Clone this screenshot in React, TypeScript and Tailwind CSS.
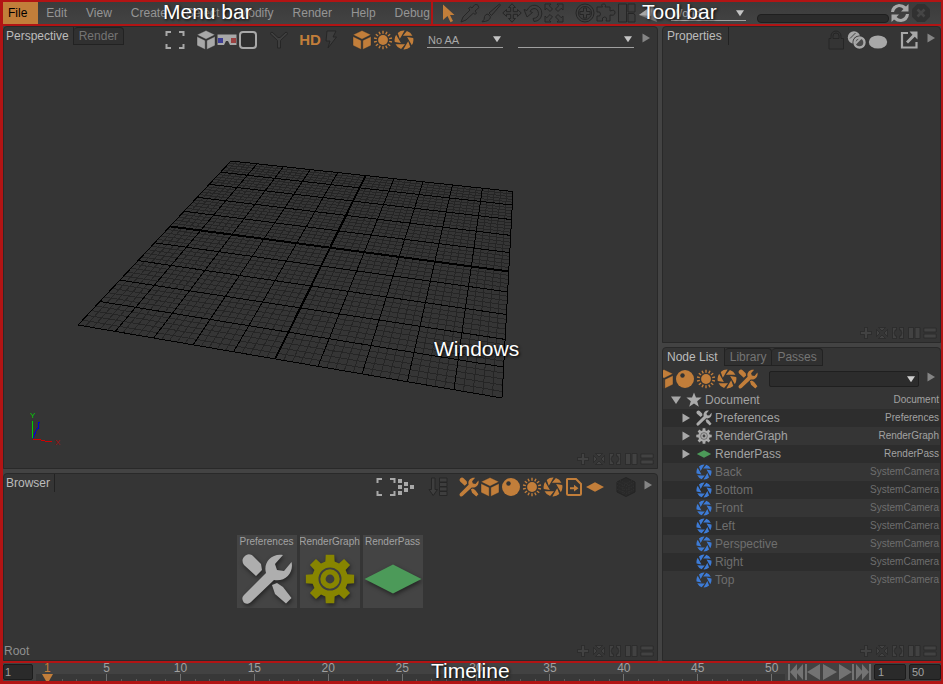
import { type ReactNode } from 'react';
import clsx from 'clsx';

interface IconProps {
    className?: string;
}

const ORANGE = 'fill-[#c27e3a] text-[#c27e3a]';
const LIGHT = 'fill-[#a8a8a8] text-[#a8a8a8]';
const OFF = 'fill-[#3e3e3e] text-[#262626]';

/* ---------- icons ---------- */

const Icon = ({ children, className, box = '0 0 20 20' }: { children: ReactNode; className?: string; box?: string }) => (
    <svg viewBox={box} className={clsx('block shrink-0', className ?? 'size-5')} aria-hidden="true">
        {children}
    </svg>
);

const Cube = ({ className }: IconProps) => (
    <Icon className={className}>
        <path d="M10 .5 19 4.8 10 9.2 1 4.8ZM1 6.5 9.2 10.4V19.5L1 15.5ZM19 6.5 10.8 10.4V19.5L19 15.5Z" stroke="#2a2a2a" strokeWidth=".4" />
    </Icon>
);

const Sun = ({ className }: IconProps) => (
    <Icon className={className} box="-10 -10 20 20">
        <circle r="4.9" />
        {Array.from({ length: 14 }, (_, i) => (
            <path key={i} d="M0 -6.3V-9.2" stroke="currentColor" strokeWidth="1.4" transform={`rotate(${(i * 360) / 14})`} />
        ))}
    </Icon>
);

const Shutter = ({ className }: IconProps) => (
    <Icon className={className} box="-10 -10 20 20">
        {[0, 60, 120, 180, 240, 300].map((a) => (
            <path key={a} d="M4.2 1.2 2.8 3.6-.6 9.4A9.4 9.4 0 0 0 6.3 7Z" transform={`rotate(${a})`} />
        ))}
    </Icon>
);

const Tools = ({ className }: IconProps) => (
    <Icon className={className} box="-1 -1 52 52">
        <path d="M41 1 33 10 35 16 42 17 49.5 8C52 18 44 28 32 26L9 48C6 51 2 50 1 47 0 45 0 43 2 41L24 19C21 9 29-1 41 1Z" />
        <path d="M2 3C5-1 9 0 11 2L19 10 20 16 14 22 2 11C0 8 0 5 2 3ZM30 31 35 29 41 33 49.5 44 44 49.5 33 40Z" />
    </Icon>
);

const Sphere = ({ className }: IconProps) => (
    <Icon className={className}>
        <circle cx="10" cy="10" r="9" />
        <circle cx="7.5" cy="6.5" r="2.2" fill="#333" />
    </Icon>
);

const Diamond = ({ className }: IconProps) => (
    <Icon className={className}>
        <path d="M10 5.2 19 10 10 14.8 1 10Z" />
    </Icon>
);

const gearPath = (() => {
    const pts: string[] = [];
    for (let i = 0; i < 8; i++) {
        [[-15, 18], [-10, 24.5], [10, 24.5], [15, 18]].forEach(([da, r]) => {
            const a = ((i * 45 + da) * Math.PI) / 180;
            pts.push(`${(r * Math.cos(a)).toFixed(2)} ${(r * Math.sin(a)).toFixed(2)}`);
        });
    }
    return `M${pts.join('L')}Z`;
})();

const Gear = ({ className, hole }: IconProps & { hole: string }) => (
    <Icon className={className} box="-25 -25 50 50">
        <path d={gearPath} />
        <circle r="10.6" fill="none" stroke={hole} strokeWidth="1.8" />
        <circle r="4.4" fill={hole} />
    </Icon>
);

const Brackets = () => (
    <Icon>
        <path d="M1.5 6V2H6M14 2H18.5V6M18.5 14V18H14M6 18H1.5V14" fill="none" stroke="currentColor" strokeWidth="2" />
    </Icon>
);

const Glasses = () => (
    <Icon>
        <path d="M.5 4.5H19.5V15H13L11 11H9L7 15H.5Z" />
        <path d="M1 8H6V13H1Z" fill="#3e3e94" />
        <path d="M14 8H19V13H14Z" fill="#9a4141" />
    </Icon>
);

const RoundSquare = () => (
    <Icon>
        <rect x="2" y="2" width="16" height="16" rx="3" fill="#303030" stroke="currentColor" strokeWidth="2" />
    </Icon>
);

const Fork = () => (
    <Icon>
        <path d="M1 3.5 3 2 9 7.5H11L17 2 19 3.5 11.5 10.5V18H8.5V10.5Z" stroke="currentColor" />
    </Icon>
);

const Bolt = () => (
    <Icon>
        <path d="M6 1H15L12 7H15.5L7 18 9 11H5Z" stroke="currentColor" />
    </Icon>
);

const Nodes = () => (
    <Icon>
        <path d="M1 2H5V6H1ZM1 8H5V12H1ZM1 14H5V18H1ZM7 5H11V9H7ZM7 11H11V15H7ZM13 8H17V12H13Z" />
    </Icon>
);

const SortList = () => (
    <Icon>
        <path d="M3.5 1H7V12.5H9.5L5.2 18.5 1 12.5H3.5ZM11.5 1H19V5H11.5ZM11.5 5.5H19V9.5H11.5ZM11.5 10H19V14H11.5ZM11.5 14.5H19V18.5H11.5Z" stroke="currentColor" />
    </Icon>
);

const FileArrow = () => (
    <Icon>
        <path d="M3.5 2H12L17 7V16.5Q17 18 15.5 18H4.5Q3 18 3 16.5V2.5Z" fill="none" stroke="currentColor" strokeWidth="2" />
        <path d="M6 10.3H10V7.8L14.5 11.2 10 14.6V12.2H6Z" />
    </Icon>
);

const DarkCube = () => (
    <Icon>
        <path d="M10 .5 19 5V15L10 19.5 1 15V5Z" fill="#292929" stroke="#252525" />
        <path d="M1 5 10 9.5 19 5M10 9.5V19M4 3.5 13 8V18M16 3.5 7 8V18M1 8.5 10 13 19 8.5M1 12 10 16.5 19 12" fill="none" stroke="#3a3a3a" strokeWidth=".6" strokeDasharray="1 1" />
    </Icon>
);

const Lock = () => (
    <Icon>
        <path d="M3 8.5H5V6A5 5 0 0 1 15 6V8.5H17.5V19H3ZM7 8.5H13V6A3 3 0 0 0 7 6Z" fillRule="evenodd" stroke="currentColor" fill="#343434" />
    </Icon>
);

const Rings = () => (
    <Icon>
        <circle cx="7" cy="7.5" r="6.2" />
        <path d="M3 8.5 8.5 3" stroke="#444" strokeWidth="1" />
        <circle cx="12.5" cy="12.5" r="6" fill="#4a4a4a" stroke="#333" strokeWidth="2" />
        <circle cx="12.5" cy="12.5" r="5" fill="none" stroke="currentColor" strokeWidth="2.4" />
        <path d="M8.5 13.5 14 8" stroke="currentColor" strokeWidth="2" />
    </Icon>
);

const Ellipse = () => (
    <Icon>
        <ellipse cx="10" cy="12" rx="9.2" ry="6.6" />
    </Icon>
);

const External = () => (
    <Icon>
        <path d="M9 3H3V17.5H17.5V12" fill="none" stroke="currentColor" strokeWidth="2.2" />
        <path d="M10.5 1.5H18.5V9.5L15.8 6.8 9 13.5 7 11.5 13.5 4.8Z" />
    </Icon>
);

const Cursor = () => (
    <Icon>
        <path d="M4 1.5 15.5 12H11L14 18 11.5 19.3 8.5 13 4 17Z" />
    </Icon>
);

const Pipette = () => (
    <Icon>
        <path d="M1 19 3 14 10 7 8.5 5.5 10.5 4 12 5 15 1.5Q18 .5 19 4.5L15 8 16.5 10 15 11.5 13.5 10 6 17Z" stroke="currentColor" />
    </Icon>
);

const Brush = () => (
    <Icon>
        <path d="M18.5 1 8 10 10.5 12.5 19.5 2ZM7 11 9.5 13.8Q9 18.5 1 18.8 4 16.5 3.5 13.5 4.5 11 7 11Z" stroke="currentColor" />
    </Icon>
);

const Move = () => (
    <Icon>
        <path d="M10 .8 13.5 4.5H11.3V8.7H15.5V6.5L19.2 10 15.5 13.5V11.3H11.3V15.5H13.5L10 19.2 6.5 15.5H8.7V11.3H4.5V13.5L.8 10 4.5 6.5V8.7H8.7V4.5H6.5Z" stroke="currentColor" />
    </Icon>
);

const Rotate = () => (
    <Icon>
        <path d="M1 6.5 4 7.5Q6.5 2 12 2.2 19 3.5 18.8 11 18 18 11 18.5L10 15.5Q15.5 15 15.5 10.5 15 5.5 11 5.5 8 5.8 7 8.5L9.5 9.5 4 14Z" stroke="currentColor" />
    </Icon>
);

const Scale = () => (
    <Icon>
        {[0, 90, 180, 270].map((a) => (
            <path key={a} d="M1 1H7L5.3 2.8 8.5 6 6 8.5 2.8 5.3 1 7Z" stroke="currentColor" transform={`rotate(${a} 10 10)`} />
        ))}
    </Icon>
);

const Target = () => (
    <Icon>
        <circle cx="10" cy="10" r="9" stroke="currentColor" />
        <circle cx="10" cy="10" r="6.5" stroke="currentColor" />
        <path d="M8.5 5H11.5V8.5H15V11.5H11.5V15H8.5V11.5H5V8.5H8.5Z" stroke="currentColor" />
    </Icon>
);

const Puzzle = () => (
    <Icon>
        <path d="M1 4H6.5Q4.5 1 7.5 1T9 4H14V8Q19 6 19 9.5T14 12V18H10Q11.5 14 8.5 14T6.5 18H1V13Q4.5 14 4.5 11T1 9Z" stroke="currentColor" />
    </Icon>
);

const LayoutIcon = () => (
    <Icon>
        <path d="M1.5 1H9.5V19H1.5ZM11 1H18V9H11ZM11 10.5H16Q18 10.5 18 12.5V19H11Z" stroke="currentColor" />
    </Icon>
);

const Refresh = () => (
    <Icon>
        <path d="M1 9Q1.5 2 9 1 13.5 1 16 3.5L18.5 1V8.5H11L13.5 6Q11.5 4 9 4 5 5 4 9ZM19 11Q18.5 18 11 19 6.5 19 4 16.5L1.5 19V11.5H9L6.5 14Q8.5 16 11 16 15 15 16 11Z" />
    </Icon>
);

const Stop = () => (
    <Icon>
        <path d="M6.2 1H13.8L19 6.2V13.8L13.8 19H6.2L1 13.8V6.2Z" fill="#313131" />
        <path d="M6.5 6.5 13.5 13.5M13.5 6.5 6.5 13.5" stroke="#454545" strokeWidth="2.6" />
    </Icon>
);

const Triangle = ({ d, className }: { d: string; className: string }) => (
    <Icon box="0 0 10 10" className={className}>
        <path d={d} />
    </Icon>
);

const RIGHT = 'M1.5 .5 9 5 1.5 9.5Z';
const DOWN = 'M0 1.5H10L5 9Z';

/* ---------- shared controls ---------- */

const Tool = ({ label, tone, children }: { label: string; tone: string; children: ReactNode }) => (
    <button type="button" aria-label={label} className={clsx('block size-5 shrink-0', tone)}>
        {children}
    </button>
);

const Group = ({ children }: { children: ReactNode }) => <div className="flex shrink-0 gap-px">{children}</div>;

const More = () => (
    <button type="button" aria-label="Show more" className="mb-1 -ml-1 shrink-0 fill-[#858585]">
        <Triangle d={RIGHT} className="size-2.5" />
    </button>
);

const Select = ({ label, value, className }: { label: string; value: string; className: string }) => (
    <div className={clsx('relative flex h-4 shrink-0 items-center border-b border-[#a0a0a0]', className)}>
        <select aria-label={label} defaultValue={value} className="h-full w-full appearance-none bg-transparent px-px text-[11px] leading-4 text-[#a8a8a8] outline-none">
            <option>{value}</option>
        </select>
        <Triangle d={DOWN} className="pointer-events-none absolute right-0.5 size-2 fill-[#c4c4c4]" />
    </div>
);

const Tabs = ({ items, wide }: { items: string[]; wide?: boolean }) => (
    <div role="tablist" className="flex h-[18px] shrink-0 self-start">
        {items.map((item, i) => (
            <button
                key={item}
                type="button"
                role="tab"
                aria-selected={i === 0}
                className={clsx(
                    'border-r border-[#222] text-[12px] leading-4',
                    i > 0 && 'rounded-t-sm border-t border-b bg-[#303030] px-[5px] text-[#747474]',
                    i === 0 && (wide ? 'pr-1.5 pl-1' : 'pr-1 pl-0.5'),
                    i === 0 && 'text-[#bcbcbc]',
                )}
            >
                {item}
            </button>
        ))}
    </div>
);

const Panel = ({ label, children }: { label: string; children: ReactNode }) => (
    <section aria-label={label} className="flex min-w-0 flex-col overflow-hidden rounded-t-sm border border-[#292929] bg-[#353535]">
        {children}
    </section>
);

const windowButtons: [string, string][] = [
    ['Add tab', 'M5.5 1.5H8.5V5.5H12.5V8.5H8.5V12.5H5.5V8.5H1.5V5.5H5.5Z'],
    ['Close', 'M3.5 1.5H10.5L7 5ZM12.5 3.5V10.5L9 7ZM10.5 12.5H3.5L7 9ZM1.5 10.5V3.5L5 7Z'],
    ['Maximize', 'M1.5 1.5H5.5V4H4V5L3 7 4 9V10H5.5V12.5H1.5ZM12.5 1.5H8.5V4H10V5L11 7 10 9V10H8.5V12.5H12.5Z'],
    ['Split columns', 'M1.5 1.5H6.5V12.5H1.5ZM8 1.5H13V12.5H8Z'],
    ['Split rows', 'M.8 2H13.2V6H.8ZM.8 8H13.2V12H.8Z'],
];

const PanelFooter = ({ children }: { children?: ReactNode }) => (
    <div className="mt-auto flex h-[18px] shrink-0 items-center justify-between pr-[3px] text-[12px] leading-4 text-[#909090]">
        <span>{children}</span>
        <div className="flex gap-0.5">
            {windowButtons.map(([label, d]) => (
                <button key={label} type="button" aria-label={label}>
                    <Icon box="0 0 14 14" className="size-3.5">
                        <path d={d} fill="#424242" stroke="#292929" strokeWidth=".8" />
                    </Icon>
                </button>
            ))}
        </div>
    </div>
);

/* ---------- header ---------- */

const menus = ['File', 'Edit', 'View', 'Create', 'Select', 'Modify', 'Render', 'Help', 'Debug'];

const Header = () => (
    <header className="flex h-6 shrink-0 border-b-2 border-[#b21414] bg-linear-to-b from-[#3b3b3b] to-[#434343]">
        <nav className="flex w-[430px] shrink-0 border-r-2 border-[#b21414] text-[12px] text-[#959595]">
            {menus.map((menu, i) => (
                <button key={menu} type="button" className={clsx('pr-[11px] last:pr-0', i === 0 ? 'bg-[#c27e3a] pl-[5px] text-black' : 'pl-2')}>
                    {menu}
                </button>
            ))}
        </nav>
        <div className="flex min-w-0 flex-1 items-center gap-[11px] pl-1.5">
            <Group>
                <Tool label="Select" tone={ORANGE}><Cursor /></Tool>
                <Tool label="Pick" tone={OFF}><Pipette /></Tool>
                <Tool label="Paint" tone={OFF}><Brush /></Tool>
                <Tool label="Move" tone={OFF}><Move /></Tool>
                <Tool label="Rotate" tone={OFF}><Rotate /></Tool>
                <Tool label="Scale" tone={OFF}><Scale /></Tool>
            </Group>
            <Group>
                <Tool label="Add" tone={OFF}><Target /></Tool>
                <Tool label="Plugins" tone={OFF}><Puzzle /></Tool>
                <Tool label="Layout" tone={OFF}><LayoutIcon /></Tool>
                <Tool label="Space" tone={LIGHT}>
                    <Icon><path d="M1 12 15 2 19 19Z" fill="#777" /><path d="M1 12 15 2 13 13Z" /></Icon>
                </Tool>
            </Group>
            <Select label="Coordinate system" value="World" className="ml-0.5 w-[75px]" />
            <div role="progressbar" aria-label="Progress" className="mt-2.5 h-[9px] min-w-0 flex-1 rounded-sm border border-[#1f1f1f] bg-[#2b2b2b]" />
            <div className="-ml-2.5 flex gap-px pr-2.5">
                <Tool label="Refresh" tone={LIGHT}><Refresh /></Tool>
                <Tool label="Stop" tone={OFF}><Stop /></Tool>
            </div>
        </div>
    </header>
);

/* ---------- viewport ---------- */

// perspective corners of the ground plane: far left, far right, near right, near left
const P = [[231, 161], [513, 191.5], [502, 398], [78, 325]];

const project = (() => {
    const [[x0, y0], [x1, y1], [x2, y2], [x3, y3]] = P;
    const dx1 = x1 - x2, dx2 = x3 - x2, sx = x0 - x1 + x2 - x3;
    const dy1 = y1 - y2, dy2 = y3 - y2, sy = y0 - y1 + y2 - y3;
    const det = dx1 * dy2 - dx2 * dy1;
    const g = (sx * dy2 - dx2 * sy) / det;
    const h = (dx1 * sy - sx * dy1) / det;
    return (u: number, v: number) => {
        const w = g * u + h * v + 1;
        const x = ((x1 - x0 + g * x1) * u + (x3 - x0 + h * x3) * v + x0) / w;
        const y = ((y1 - y0 + g * y1) * u + (y3 - y0 + h * y3) * v + y0) / w;
        return `${x.toFixed(1)} ${y.toFixed(1)}`;
    };
})();

const gridLines = (steps: number[]) =>
    steps.map((s) => `M${project(s, 0)}L${project(s, 1)}M${project(0, s)}L${project(1, s)}`).join('');

const minor = gridLines(Array.from({ length: 51 }, (_, i) => i / 50).filter((_, i) => i % 5 !== 0));
const major = gridLines(Array.from({ length: 11 }, (_, i) => i / 10));

const Scene = () => (
    <svg viewBox="4 52 640 396" preserveAspectRatio="xMinYMin meet" className="block h-[396px] w-full" fill="none" shapeRendering="crispEdges">
        <path d={minor} stroke="#252525" />
        <path d={major} stroke="#000" />
        <path d={gridLines([0.5])} stroke="#000" strokeWidth="2" />
        <path d="M32.5 421V438" stroke="#00d000" />
        <path d="M33 438 37 429 38.5 428V422H40" stroke="#0000d0" />
        <path d="M33 439.5H39L47 441.5H52" stroke="#d00000" />
        <text x="30" y="418" fontSize="8" fill="#00d000">Y</text>
        <text x="55" y="445" fontSize="8" fill="#a01010">X</text>
    </svg>
);

const Viewport = () => (
    <Panel label="Viewport">
        <div className="flex h-[25px] shrink-0 items-center gap-[11px] pr-1.5">
            <Tabs items={['Perspective', 'Render']} />
            <div className="ml-auto"><Tool label="Frame all" tone={LIGHT}><Brackets /></Tool></div>
            <Group>
                <Tool label="Shading" tone={LIGHT}><Cube /></Tool>
                <Tool label="Stereo" tone={LIGHT}><Glasses /></Tool>
                <Tool label="Gate" tone={LIGHT}><RoundSquare /></Tool>
            </Group>
            <Tool label="Branches" tone={OFF}><Fork /></Tool>
            <Group>
                <button type="button" className="flex w-5 justify-center text-[15px] leading-5 font-bold text-[#c27e3a]">
                    HD
                </button>
                <Tool label="Fast" tone={OFF}><Bolt /></Tool>
            </Group>
            <Group>
                <Tool label="Meshes" tone={ORANGE}><Cube /></Tool>
                <Tool label="Lights" tone={ORANGE}><Sun /></Tool>
                <Tool label="Cameras" tone={ORANGE}><Shutter /></Tool>
            </Group>
            <Select label="Antialiasing" value="No AA" className="ml-0.5 w-[76px]" />
            <Select label="Render pass" value="" className="ml-1 w-[116px]" />
            <More />
        </div>
        <Scene />
        <PanelFooter />
    </Panel>
);

/* ---------- browser ---------- */

const Thumb = ({ name, children }: { name: string; children: ReactNode }) => (
    <button type="button" className="flex h-[73px] w-[60px] flex-col items-center overflow-hidden bg-[#444]">
        <span className="text-[10px] leading-[14px] text-[#a2a2a2]">{name}</span>
        <span className="flex flex-1 items-center drop-shadow-[1px_2px_2px_rgba(0,0,0,0.5)]">{children}</span>
    </button>
);

const Browser = () => (
    <Panel label="Browser">
        <div className="flex h-[25px] shrink-0 items-center gap-[11px] pr-1">
            <Tabs items={['Browser']} />
            <div className="ml-auto">
                <Group>
                    <Tool label="Frame all" tone={LIGHT}><Brackets /></Tool>
                    <Tool label="Hierarchy" tone={LIGHT}><Nodes /></Tool>
                </Group>
            </div>
            <Tool label="Sort" tone={OFF}><SortList /></Tool>
            <Group>
                <Tool label="Preferences" tone={ORANGE}><Tools /></Tool>
                <Tool label="Meshes" tone={ORANGE}><Cube /></Tool>
                <Tool label="Materials" tone={ORANGE}><Sphere /></Tool>
                <Tool label="Lights" tone={ORANGE}><Sun /></Tool>
                <Tool label="Cameras" tone={ORANGE}><Shutter /></Tool>
                <Tool label="References" tone={ORANGE}><FileArrow /></Tool>
                <Tool label="Passes" tone={ORANGE}><Diamond /></Tool>
            </Group>
            <Tool label="Bounds" tone={OFF}><DarkCube /></Tool>
            <More />
        </div>
        <div className="flex flex-1 items-center justify-center gap-[3px] pt-0.5 pr-0.5">
            <Thumb name="Preferences"><Tools className="size-[52px] fill-[#aeaeae]" /></Thumb>
            <Thumb name="RenderGraph"><Gear className="size-[50px] fill-[#878500]" hole="#3e3e3e" /></Thumb>
            <Thumb name="RenderPass">
                <Icon box="0 0 58 30" className="h-[30px] w-[58px] fill-[#4c9a59]">
                    <path d="M29 .5 57.5 15 29 29.5 .5 15Z" />
                </Icon>
            </Thumb>
        </div>
        <PanelFooter>Root</PanelFooter>
    </Panel>
);

/* ---------- right column ---------- */

const Properties = () => (
    <Panel label="Properties">
        <div className="flex h-[25px] shrink-0 items-center gap-[11px] pr-1">
            <Tabs wide items={['Properties']} />
            <div className="ml-auto">
                <Group>
                    <Tool label="Lock" tone={OFF}><Lock /></Tool>
                    <Tool label="Overrides" tone={LIGHT}><Rings /></Tool>
                    <Tool label="Preview" tone={LIGHT}><Ellipse /></Tool>
                </Group>
            </div>
            <Tool label="Open in window" tone={LIGHT}><External /></Tool>
            <More />
        </div>
        <PanelFooter />
    </Panel>
);

const nodes = [
    { name: 'Document', type: 'Document' },
    { name: 'Preferences', type: 'Preferences' },
    { name: 'RenderGraph', type: 'RenderGraph' },
    { name: 'RenderPass', type: 'RenderPass' },
    ...['Back', 'Bottom', 'Front', 'Left', 'Perspective', 'Right', 'Top'].map((name) => ({ name, type: 'SystemCamera' })),
];

const NodeIcon = ({ name }: { name: string }) => {
    switch (name) {
        case 'Document':
            return (
                <Icon className="size-4 fill-[#ababab]">
                    <path d="M10 .5 12.5 7H19.5L14 11.5 16 18.5 10 14.5 4 18.5 6 11.5 .5 7H7.5Z" />
                </Icon>
            );
        case 'Preferences':
            return <Tools className="size-4 fill-[#ababab]" />;
        case 'RenderGraph':
            return <Gear className="size-4 fill-[#ababab]" hole="#444" />;
        case 'RenderPass':
            return <Diamond className="size-4 fill-[#4c9a59]" />;
        default:
            return <Shutter className="size-4 fill-[#3d7bd6]" />;
    }
};

const NodeList = () => (
    <Panel label="Node List">
        <Tabs wide items={['Node List', 'Library', 'Passes']} />
        <div className="flex h-[25px] shrink-0 items-center gap-[11px] pr-1">
            <div className="flex gap-px">
                <div className="flex w-[11px] justify-end overflow-hidden">
                    <Tool label="Meshes" tone={ORANGE}><Cube /></Tool>
                </div>
                <Tool label="Materials" tone={ORANGE}><Sphere /></Tool>
                <Tool label="Lights" tone={ORANGE}><Sun /></Tool>
                <Tool label="Cameras" tone={ORANGE}><Shutter /></Tool>
                <Tool label="Preferences" tone={ORANGE}><Tools /></Tool>
            </div>
            <div className="relative flex min-w-0 flex-1 items-center">
                <input aria-label="Filter" className="h-4 w-full rounded-xs border border-[#1f1f1f] bg-[#2c2c2c] px-1 text-[11px] text-[#a8a8a8] outline-none" />
                <Triangle d={DOWN} className="pointer-events-none absolute right-1 size-2 fill-[#d0d0d0]" />
            </div>
            <More />
        </div>
        <table className="w-full">
            <tbody>
                {nodes.map(({ name, type }, i) => (
                    <tr key={name} className={clsx('h-[18px]', i % 2 ? 'bg-[#2d2d2d]' : 'bg-[#353535]', i < 4 ? 'text-[#a2a2a2]' : 'text-[#6e6e6e]')}>
                        <td className="p-0 text-[12px] leading-[18px]">
                            <div className={clsx('flex items-center gap-[3px]', i === 0 ? 'pl-2' : 'pl-[18px]')}>
                                <span className="flex w-3 fill-[#a8a8a8]">
                                    {i < 4 && (
                                        <button type="button" aria-label={`Toggle ${name}`}>
                                            <Triangle d={i === 0 ? DOWN : RIGHT} className="size-2.5" />
                                        </button>
                                    )}
                                </span>
                                <NodeIcon name={name} />
                                {name}
                            </div>
                        </td>
                        <td className="p-0 pr-px text-right text-[10px] leading-[18px]">{type}</td>
                    </tr>
                ))}
            </tbody>
        </table>
        <PanelFooter />
    </Panel>
);

/* ---------- timeline ---------- */

const transport: [string, string][] = [
    ['First frame', 'M0 0H2V16H0ZM2 8 9 0V16ZM8 8 15 0V16Z'],
    ['Previous frame', 'M0 0H2V16H0ZM2 8 15 0V16Z'],
    ['Play', 'M1 0 15 8 1 16Z'],
    ['Next frame', 'M0 0 13 8 0 16ZM13 0H15V16H13Z'],
    ['Last frame', 'M0 0 7 8 0 16ZM6 0 13 8 6 16ZM13 0H15V16H13Z'],
];

const FrameInput = ({ label, value, className }: { label: string; value: string; className: string }) => (
    <input
        aria-label={label}
        defaultValue={value}
        className={clsx('h-4 shrink-0 rounded-xs border border-[#1c1c1c] bg-[#2a2a2a] text-[11px] leading-3 text-[#a0a0a0] outline-none', className)}
    />
);

const Timeline = () => (
    <footer className="flex h-5 shrink-0 items-center gap-[3px] border-t-2 border-[#b21414] bg-[#424242]">
        <FrameInput label="Current frame" value="1" className="w-[30px] px-px" />
        <div className="flex h-full min-w-0 flex-1 bg-linear-to-b from-[#424242] from-60% to-[#383838] to-60% pr-1.5 pl-1">
            {Array.from({ length: 50 }, (_, i) => i + 1).map((frame) => (
                <div key={frame} className="flex min-w-0 flex-1 flex-col items-center justify-between">
                    <span className={clsx('h-[11px] text-[12px] leading-[11px]', frame === 1 ? 'text-[#c27e3a]' : 'text-[#a0a0a0]')}>
                        {(frame === 1 || frame % 5 === 0) && frame}
                    </span>
                    {frame === 1 ? (
                        <Icon box="0 0 11 7" className="h-[7px] w-[11px] fill-[#c27e3a]"><path d="M0 0H11L7 7H4Z" /></Icon>
                    ) : (
                        <span className={clsx('w-px', frame % 5 === 0 ? 'h-[7px] bg-[#707070]' : 'h-0.5 bg-[#5c5c5c]')} />
                    )}
                </div>
            ))}
        </div>
        <div className="flex shrink-0 gap-0.5">
            {transport.map(([label, d]) => (
                <button key={label} type="button" aria-label={label}>
                    <Icon box="0 0 15 16" className="h-4 w-[15px] fill-[#737373]"><path d={d} /></Icon>
                </button>
            ))}
        </div>
        <FrameInput label="Start frame" value="1" className="w-8 px-[3px]" />
        <FrameInput label="End frame" value="50" className="w-8 px-0.5" />
    </footer>
);

const Note = ({ children, className }: { children: ReactNode; className: string }) => (
    <span className={clsx('pointer-events-none absolute text-[21px] leading-6 whitespace-nowrap text-white [text-shadow:1px_1px_3px_#000]', className)}>
        {children}
    </span>
);

export default function App() {
    return (
        <div className="relative flex min-h-screen flex-col border-t-2 border-r-2 border-b-[3px] border-l-[3px] border-[#b21414] bg-[#434343] font-['Liberation_Sans',Arial,sans-serif]">
            <Header />
            <main className="grid flex-1 grid-cols-[655fr_279fr] gap-1">
                <div className="grid min-w-0 grid-rows-[443fr_188fr] gap-1">
                    <Viewport />
                    <Browser />
                </div>
                <div className="grid min-w-0 grid-rows-[317fr_314fr] gap-1">
                    <Properties />
                    <NodeList />
                </div>
            </main>
            <Timeline />
            <Note className="-top-0.5 left-40">Menu bar</Note>
            <Note className="-top-0.5 left-[639px]">Tool bar</Note>
            <Note className="top-[335px] left-[431px]">Windows</Note>
            <Note className="-bottom-0.5 left-[428px]">Timeline</Note>
        </div>
    );
}
